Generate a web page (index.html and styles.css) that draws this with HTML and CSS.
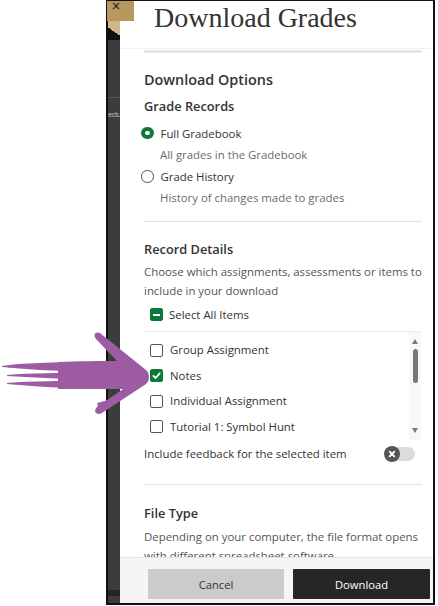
FILE: index.html
```html
<!DOCTYPE html>
<html>
<head>
<meta charset="utf-8">
<link rel="stylesheet" href="styles.css">
</head>
<body>
<div class="frame">
  <div class="strip">
    <div class="strip-top"></div>
    <div class="strip-black"></div>
    <div class="strip-line"></div>
    <div class="strip-text">ectu</div>
    <div class="strip-fill"></div>
    <div class="strip-band"></div>
    <div class="strip-end"></div>
  </div>
  <div class="close">×</div>
  <div class="panel">
    <div class="head"><h1 class="title">Download Grades</h1></div>
    <div class="head-bar"></div>
    <div class="content">
      <h2 class="sec-title">Download Options</h2>
      <h3 class="sub-title">Grade Records</h3>
      <div class="radios">
        <div class="option">
          <div class="opt-row"><span class="radio radio-on"></span><span>Full Gradebook</span></div>
          <div class="opt-desc">All grades in the Gradebook</div>
        </div>
        <div class="option">
          <div class="opt-row"><span class="radio"></span><span>Grade History</span></div>
          <div class="opt-desc">History of changes made to grades</div>
        </div>
      </div>
      <div class="sep sep-1"></div>
      <h3 class="sub-title rd-title">Record Details</h3>
      <p class="help">Choose which assignments, assessments or items to include in your download</p>
      <div class="select-all"><span class="cb cb-partial"><span class="minus"></span></span><span>Select All Items</span></div>
      <div class="sep sep-2"></div>
      <div class="list">
        <div class="items">
          <div class="item"><span class="cb"></span><span>Group Assignment</span></div>
          <div class="item"><span class="cb cb-on"><svg viewBox="0 0 13 13" width="13" height="13"><path d="M3.4 6.9 L5.6 9 L9.7 4.3" fill="none" stroke="#fff" stroke-width="1.8" stroke-linecap="round" stroke-linejoin="round"/></svg></span><span>Notes</span></div>
          <div class="item"><span class="cb"></span><span>Individual Assignment</span></div>
          <div class="item"><span class="cb"></span><span>Tutorial 1: Symbol Hunt</span></div>
        </div>
        <div class="scroll">
          <span class="arr-up"></span>
          <span class="thumb"></span>
          <span class="arr-down"></span>
        </div>
      </div>
      <div class="toggle-row">
        <span>Include feedback for the selected item</span>
        <span class="toggle"><span class="knob"><svg viewBox="0 0 16 16" width="16" height="16"><path d="M5.7 5.7 L10.3 10.3 M10.3 5.7 L5.7 10.3" stroke="#fff" stroke-width="1.8" stroke-linecap="round"/></svg></span></span>
      </div>
      <div class="sep sep-3"></div>
      <h3 class="sub-title ft-title">File Type</h3>
      <p class="help ft-help">Depending on your computer, the file format opens with different spreadsheet software</p>
    </div>
    <div class="foot">
      <button class="btn btn-cancel">Cancel</button>
      <button class="btn btn-dl">Download</button>
    </div>
  </div>
</div>
<svg class="arrow" width="438" height="606" viewBox="0 0 438 606">
  <g fill="#9d5ca2">
    <path d="M58 362 C80 361 100 361 117 361 L96 339 C93 335 95 331 100 333 L146 370 C150 374 150 380 146 384 L102 413 C96 416 93 411 97 407 L123 389 C100 389 80 389 58 389 Z"/>
    <path d="M2 366 C20 363 55 362 92 362 L92 372 C55 371 20 369 2 367 Z"/>
    <path d="M7 375 C30 373 60 373 92 373 L92 380 C60 379 30 377 7 376 Z"/>
    <path d="M7 383 C30 381 60 381 92 381 L92 389 C60 388 30 386 7 384 Z"/>
    <path d="M97 403 L112 399 L99 410 Z"/>
  </g>
</svg>
</body>
</html>
```

FILE: styles.css
```css
html, body {
  margin: 0;
  padding: 0;
}
body {
  width: 438px;
  height: 606px;
  overflow: hidden;
  position: relative;
  background: #fff;
  font-family: "Open Sans", "Liberation Sans", sans-serif;
  color: #262626;
}
.frame {
  margin-left: 106px;
  width: 325px;
  height: 602px;
  border: 2px solid #111;
  border-top-width: 1px;
  display: flex;
  position: relative;
}
.strip {
  width: 12px;
  background: #3c3c3c;
  display: flex;
  flex-direction: column;
  overflow: hidden;
}
.strip-top {
  height: 27px;
  background: #d1b888;
  flex: none;
}
.strip-black {
  height: 12px;
  flex: none;
  background: linear-gradient(35deg, #111 62%, #d1b888 62%);
}
.strip-line {
  margin-top: 57px;
  height: 1px;
  background: #555;
  flex: none;
}
.strip-text {
  margin-top: 11px;
  font-size: 8px;
  line-height: 10px;
  letter-spacing: -0.8px;
  color: #bdbdbd;
  white-space: nowrap;
  flex: none;
}
.strip-fill {
  flex: 1;
}
.strip-band {
  height: 6px;
  background: #242424;
  flex: none;
}
.strip-end {
  height: 7px;
  flex: none;
}
.close {
  position: absolute;
  left: -1px;
  top: 0;
  width: 27px;
  height: 20px;
  background: #b8985f;
  color: #1a1a1a;
  font-family: "DejaVu Sans", sans-serif;
  font-size: 12px;
  line-height: 10px;
  padding-left: 4px;
  box-sizing: border-box;
}
.panel {
  flex: 1;
  background: #fff;
  display: flex;
  flex-direction: column;
  overflow: hidden;
}
.head {
  height: 48px;
  box-sizing: border-box;
  padding: 3px 0 0 34px;
  border-bottom: 1px solid #f0f0f0;
  flex: none;
}
.title {
  margin: 0;
  font-family: "Liberation Serif", serif;
  font-weight: 400;
  font-size: 28px;
  line-height: 28px;
  color: #333;
}
.head-bar {
  margin: 1px 11px 0 24px;
  height: 3px;
  background: #e6e6e6;
  flex: none;
}
.content {
  flex: 1;
  padding: 0 11px 0 24px;
  overflow: hidden;
  font-size: 11.4px;
  line-height: 20px;
}
.sec-title {
  margin: 17px 0 0;
  font-size: 14.4px;
  font-weight: 600;
  line-height: 20px;
  color: #333;
}
.sub-title {
  margin: 6px 0 0;
  font-size: 12.8px;
  font-weight: 600;
  line-height: 20px;
  color: #333;
}
.radios {
  margin-top: 6.5px;
}
.option + .option {
  margin-top: 1.5px;
}
.opt-row {
  display: flex;
  align-items: center;
  gap: 7px;
  line-height: 21px;
  margin-left: -3px;
  color: #333;
}
.radio {
  width: 12.5px;
  height: 12.5px;
  border-radius: 50%;
  border: 1.5px solid #555;
  box-sizing: border-box;
  flex: none;
}
.radio-on {
  border: 4px solid #0a7a36;
}
.opt-desc {
  padding-left: 16px;
  line-height: 21px;
  color: #6b6b6b;
}
.sep {
  height: 1px;
  background: #e2e2e2;
}
.sep-1 {
  margin-top: 13px;
}
.rd-title {
  margin-top: 16.5px;
}
.help {
  margin: 3px 0 0;
  line-height: 19px;
  color: #555;
}
.select-all {
  margin-top: 5px;
  display: flex;
  align-items: center;
  gap: 6px;
  padding-left: 6px;
  color: #333;
}
.cb {
  width: 13px;
  height: 13px;
  border: 1.5px solid #555;
  border-radius: 2px;
  box-sizing: border-box;
  flex: none;
  display: flex;
  align-items: center;
  justify-content: center;
  position: relative;
}
.cb svg {
  position: absolute;
  left: -1.5px;
  top: -1.5px;
}
.cb-partial, .cb-on {
  background: #0a7a36;
  border-color: #0a7a36;
}
.minus {
  width: 7px;
  height: 2px;
  background: #fff;
}
.sep-2 {
  margin-top: 6px;
  background: #ececec;
}
.list {
  display: flex;
  height: 108px;
}
.items {
  flex: 1;
  padding-top: 6px;
  color: #333;
}
.item {
  height: 25.5px;
  display: flex;
  align-items: center;
  gap: 7px;
  padding-left: 6px;
}
.scroll {
  width: 12px;
  margin-right: 1px;
  background: #f8f8f8;
  display: flex;
  flex-direction: column;
  align-items: center;
}
.arr-up {
  margin-top: 7px;
  width: 0;
  height: 0;
  border-left: 3.5px solid transparent;
  border-right: 3.5px solid transparent;
  border-bottom: 5px solid #777;
}
.thumb {
  margin-top: 5px;
  width: 5px;
  height: 34px;
  border-radius: 3px;
  background: #777;
}
.arr-down {
  margin-top: auto;
  margin-bottom: 7px;
  width: 0;
  height: 0;
  border-left: 3.5px solid transparent;
  border-right: 3.5px solid transparent;
  border-top: 5px solid #777;
}
.toggle-row {
  margin-top: 4px;
  display: flex;
  align-items: center;
  justify-content: space-between;
  padding-right: 7px;
  color: #333;
}
.toggle {
  width: 30px;
  height: 14px;
  border-radius: 7px;
  background: #dcdcdc;
  display: flex;
  align-items: center;
}
.knob {
  width: 16px;
  height: 16px;
  border-radius: 50%;
  background: #555;
  margin-left: -1px;
  display: flex;
}
.sep-3 {
  margin-top: 20px;
}
.ft-title {
  margin-top: 18px;
}
.ft-help {
  margin-top: 4px;
}
.foot {
  height: 46px;
  box-sizing: border-box;
  flex: none;
  background: #f5f5f5;
  border-top: 1px solid #e4e4e4;
  padding: 11px 3px 0 28px;
  display: flex;
  gap: 9px;
}
.btn {
  height: 30px;
  border: none;
  border-radius: 1px;
  font-family: "Open Sans", sans-serif;
  font-size: 11.2px;
  padding: 0;
}
.btn-cancel {
  width: 136px;
  background: #cbcbcb;
  color: #333;
}
.btn-dl {
  width: 137px;
  background: #262626;
  color: #fff;
}
.arrow {
  position: absolute;
  left: 0;
  top: 0;
  pointer-events: none;
}
```
